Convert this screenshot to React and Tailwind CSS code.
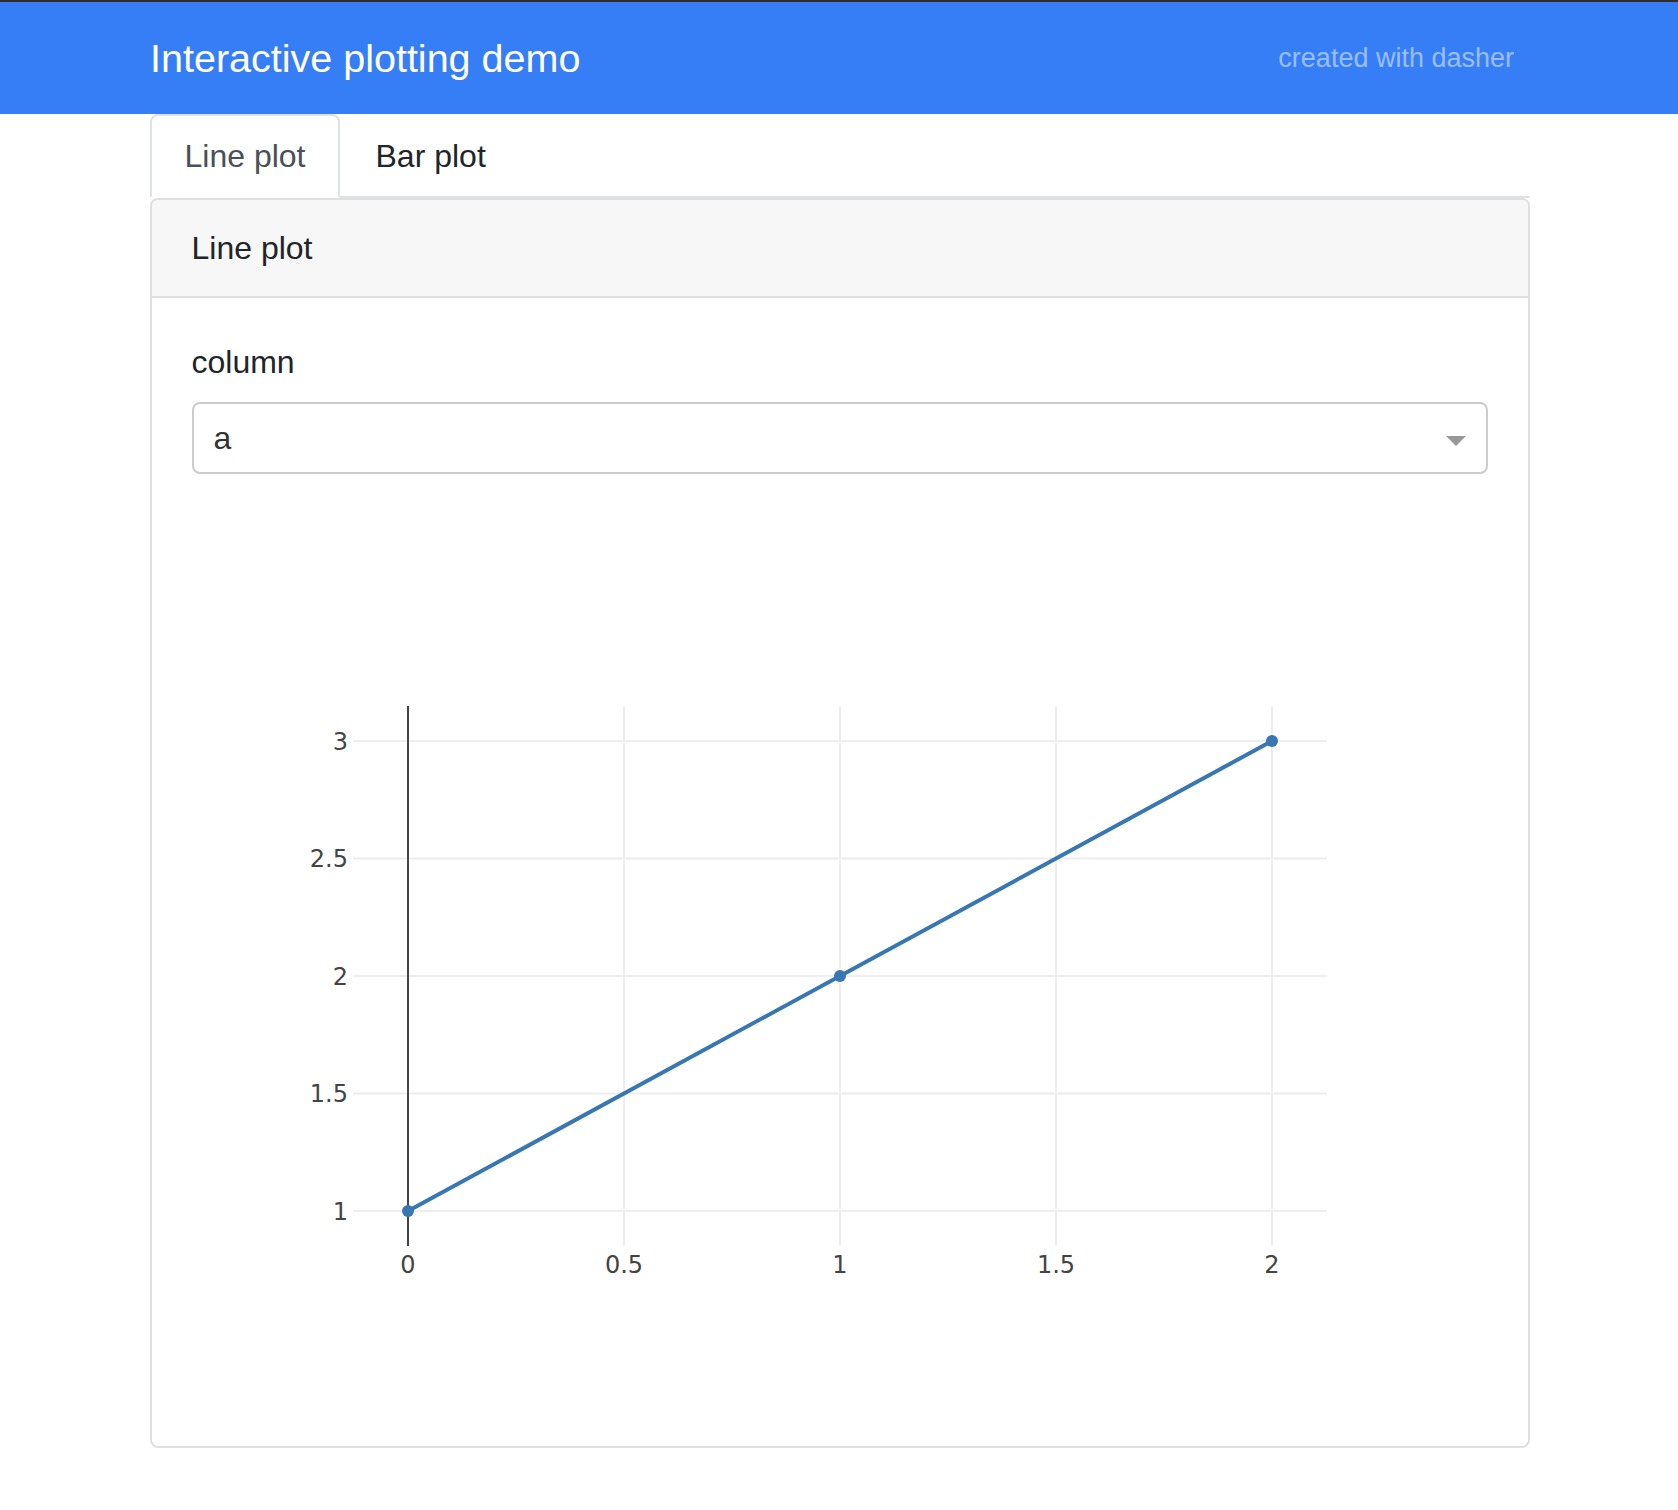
import React from 'react'

const xTicks = [
  { v: '0', x: 216 },
  { v: '0.5', x: 432 },
  { v: '1', x: 648 },
  { v: '1.5', x: 864 },
  { v: '2', x: 1080 },
]

const yTicks = [
  { v: '3', y: 235 },
  { v: '2.5', y: 352.5 },
  { v: '2', y: 470 },
  { v: '1.5', y: 587.5 },
  { v: '1', y: 705 },
]

const points = [
  [216, 705],
  [648, 470],
  [1080, 235],
]

const LineChart = () => (
  <svg width="1294" height="900" viewBox="0 0 1294 900" className="block">
    {/* grid */}
    {yTicks.map((t) => (
      <line key={t.v} x1="161" x2="1135" y1={t.y} y2={t.y} stroke="#eeeeee" strokeWidth="2" />
    ))}
    {xTicks.slice(1).map((t) => (
      <line key={t.v} x1={t.x} x2={t.x} y1="200" y2="740" stroke="#eeeeee" strokeWidth="2" />
    ))}
    {/* zero line */}
    <line x1="216" x2="216" y1="200" y2="740" stroke="#444444" strokeWidth="2" />

    {/* trace */}
    <polyline
      points={points.map((p) => p.join(',')).join(' ')}
      fill="none"
      stroke="#3877b2"
      strokeWidth="4"
    />
    {points.map(([x, y]) => (
      <circle key={x} cx={x} cy={y} r="6" fill="#3877b2" />
    ))}

    {/* tick labels */}
    <g fontFamily='"DejaVu Sans", Verdana, sans-serif' fontSize="24" fill="#444444">
      {yTicks.map((t) => (
        <text key={t.v} x="156" y={t.y + 8.5} textAnchor="end">
          {t.v}
        </text>
      ))}
      {xTicks.map((t) => (
        <text key={t.v} x={t.x} y="767" textAnchor="middle">
          {t.v}
        </text>
      ))}
    </g>
  </svg>
)

export default function App() {
  return (
    <div className="min-h-screen bg-white text-[#212529]" style={{ fontFamily: '"Liberation Sans", Arial, sans-serif' }}>
      {/* Navbar */}
      <nav className="border-t-2 border-[#2f2f2f] bg-[#367ef5] pl-[2px]">
        <div className="mx-auto flex h-[112px] w-[1380px] items-center justify-between">
          <span className="text-[39.5px] leading-[60px] text-white">Interactive plotting demo</span>
          <span className="pr-4 text-[27px] text-white/50">created with dasher</span>
        </div>
      </nav>

      <div className="pl-[1px]">
        <div className="mx-auto w-[1380px]">
          {/* Tabs */}
          <ul className="flex border-b-2 border-[#dee2e6]">
            <li className="-mb-[2px] rounded-t-lg border-2 border-[#dee2e6] border-b-white bg-white px-[33px] py-4 text-[32px] leading-[48px] text-[#495057]">
              Line plot
            </li>
            <li className="-mb-[2px] border-2 border-transparent px-[33px] py-4 text-[32px] leading-[48px] text-[#212529]">
              Bar plot
            </li>
          </ul>

          {/* Card */}
          <div className="rounded-lg border-2 border-[#dfdfdf]">
            <div className="rounded-t-md border-b-2 border-[#dfdfdf] bg-[#f7f7f7] px-10 py-6 text-[32px] leading-[48px]">
              Line plot
            </div>
            <div className="p-10">
              <div className="mb-4 text-[32px] leading-[48px]">column</div>
              <div className="flex h-[72px] items-center justify-between rounded-lg border-2 border-[#cccccc] bg-white pl-5 pr-[20px]">
                <span className="text-[32px] leading-[48px] text-[#333333]">a</span>
                <span className="mt-[6px] h-0 w-0 border-x-[10px] border-t-[10px] border-x-transparent border-t-[#999999]" />
              </div>
              <div className="mt-8">
                <LineChart />
              </div>
            </div>
          </div>
        </div>
      </div>
    </div>
  )
}
